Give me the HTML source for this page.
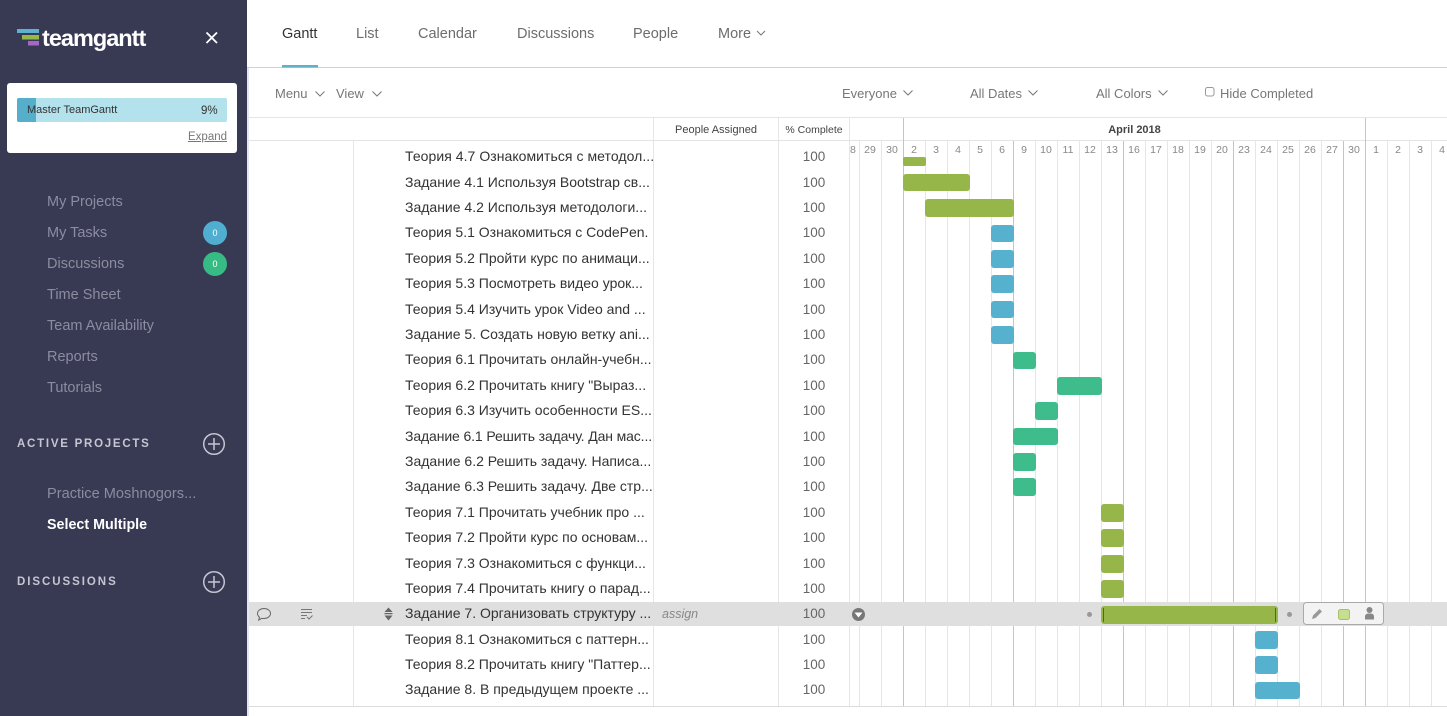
<!DOCTYPE html>
<html><head><meta charset="utf-8"><style>
html,body{margin:0;padding:0;width:1447px;height:716px;overflow:hidden;background:#fff;font-family:"Liberation Sans",sans-serif}
.a{position:absolute;white-space:nowrap}
#side{position:absolute;left:0;top:0;width:247px;height:716px;background:#383a54}
.n{position:absolute;left:47px;font-size:14.5px;color:#8b8c9f;line-height:18px;white-space:nowrap}
.h{position:absolute;left:17px;font-size:11.5px;font-weight:bold;letter-spacing:1.75px;color:#c5c6d2;line-height:14px;white-space:nowrap}
.b{position:absolute;left:203px;width:24px;height:24px;border-radius:12px;color:#fff;font-size:9px;line-height:24px;text-align:center}
.t{position:absolute;top:26px;font-size:14.5px;line-height:16px;color:#6d6d6d;white-space:nowrap}
.f{position:absolute;top:87px;font-size:13px;line-height:14px;color:#777;white-space:nowrap}
.r{position:absolute;left:405px;width:248px;height:18px;font-size:14px;line-height:18px;color:#333;white-space:nowrap;overflow:hidden}
.p{position:absolute;left:779px;width:70px;text-align:center;font-size:13.5px;line-height:18px;color:#666;margin-top:1px}
svg{position:absolute;left:0;top:0}
</style></head><body>
<div id="side">
<svg width="247" height="716">
<rect x="17" y="29" width="22" height="4" fill="#5fb2cf"/>
<rect x="22" y="35" width="17" height="4.500" fill="#95b84a"/>
<rect x="28" y="41" width="11" height="4.500" fill="#a567c6"/>
<path d="M206.500 32.500 L217 43 M217 32.500 L206.500 43" stroke="#fff" stroke-width="1.800"/>
<g fill="none" stroke="#c5c6d2" stroke-width="1.500">
<circle cx="214" cy="444" r="10.300"/><path d="M214 438V450M208 444H220"/>
<circle cx="214" cy="582" r="10.300"/><path d="M214 576V588M208 582H220"/>
</g>
</svg>
<div class="a" style="left:42px;top:24px;font-size:23.5px;font-weight:bold;color:#fff;letter-spacing:-1px;line-height:28px">teamgantt</div>
<div class="a" style="left:7px;top:83px;width:230px;height:70px;background:#fff;border-radius:3px"></div>
<div class="a" style="left:17px;top:98px;width:210px;height:24px;background:#b3e1ec;border-radius:2px"></div>
<div class="a" style="left:17px;top:98px;width:19px;height:24px;background:#55afcb;border-radius:2px 0 0 2px"></div>
<div class="a" style="left:27px;top:103px;font-size:11px;line-height:14px;color:#333">Master TeamGantt</div>
<div class="a" style="left:201px;top:104px;font-size:11.500px;line-height:14px;color:#333">9%</div>
<div class="a" style="left:188px;top:130px;font-size:11.500px;line-height:14px;color:#777;text-decoration:underline">Expand</div>
<div class="n" style="top:193px">My Projects</div>
<div class="n" style="top:224px">My Tasks</div>
<div class="n" style="top:255px">Discussions</div>
<div class="n" style="top:286px">Time Sheet</div>
<div class="n" style="top:317px">Team Availability</div>
<div class="n" style="top:348px">Reports</div>
<div class="n" style="top:379px">Tutorials</div>
<div class="b" style="top:221px;background:#50afd0">0</div>
<div class="b" style="top:252px;background:#37bb85">0</div>
<div class="h" style="top:437px">ACTIVE PROJECTS</div>
<div class="n" style="top:485px;font-size:14.6px">Practice Moshnogors...</div>
<div class="n" style="top:516px;color:#fff;font-weight:bold;font-size:14.3px">Select Multiple</div>
<div class="h" style="top:575px;letter-spacing:1.95px">DISCUSSIONS</div>
</div>

<div class="t" style="left:282px;color:#333">Gantt</div>
<div class="t" style="left:356px">List</div>
<div class="t" style="left:418px">Calendar</div>
<div class="t" style="left:517px">Discussions</div>
<div class="t" style="left:633px">People</div>
<div class="t" style="left:718px">More</div>
<div class="f" style="left:275px">Menu</div>
<div class="f" style="left:336px">View</div>
<div class="f" style="left:842px">Everyone</div>
<div class="f" style="left:970px">All Dates</div>
<div class="f" style="left:1096px">All Colors</div>
<div class="f" style="left:1220px">Hide Completed</div>

<svg width="1447" height="716">
<rect x="247" y="67" width="1200" height="1" fill="#cfd2d8"/>
<rect x="282" y="65" width="36" height="2.500" fill="#5db2c6"/>
<g fill="none" stroke="#777" stroke-width="1">
<path d="M757 31l4 4 4-4M315.500 91.500l4.500 4.500 4.500-4.500M372.500 91.500l4.500 4.500 4.500-4.500M903.500 90.500l4.500 4.500 4.500-4.500M1028.500 90.500l4.500 4.500 4.500-4.500M1158.500 90.500l4.500 4.500 4.500-4.500"/>
<rect x="1205.500" y="87.500" width="8.500" height="8.500" rx="2" stroke="#999"/>
</g>
<rect x="248" y="117" width="1199" height="1" fill="#e4e4e8"/>
<rect x="248" y="140" width="1199" height="1" fill="#e4e4e8"/>
<rect x="248" y="706" width="1199" height="1" fill="#dcdcdc"/>
<rect x="247" y="68" width="2" height="648" fill="#e6e6f0"/>
<g stroke="#e6e6e6" stroke-width="1">
<path d="M353.500 141V706M653.500 118V706M778.500 118V706M849.500 118V706"/>
<path d="M859.500 141V706M881.500 141V706M925.500 141V706M947.500 141V706M969.500 141V706M991.500 141V706M1035.500 141V706M1057.500 141V706M1079.500 141V706M1101.500 141V706M1145.500 141V706M1167.500 141V706M1189.500 141V706M1211.500 141V706M1255.500 141V706M1277.500 141V706M1299.500 141V706M1321.500 141V706M1387.500 141V706M1409.500 141V706M1431.500 141V706"/>
</g>
<g stroke="#c4c4c4" stroke-width="1">
<path d="M903.500 118V706M1013.500 141V706M1123.500 141V706M1233.500 141V706M1343.500 141V706M1365.500 118V706"/>
</g>
<rect x="249" y="602" width="1198" height="24" fill="#dfdfdf"/>
<g font-family="Liberation Sans" font-size="10.500" fill="#888" text-anchor="middle">
<text x="870" y="153">29</text><text x="892" y="153">30</text>
<text x="914" y="153">2</text><text x="936" y="153">3</text><text x="958" y="153">4</text><text x="980" y="153">5</text><text x="1002" y="153">6</text>
<text x="1024" y="153">9</text><text x="1046" y="153">10</text><text x="1068" y="153">11</text><text x="1090" y="153">12</text><text x="1112" y="153">13</text>
<text x="1134" y="153">16</text><text x="1156" y="153">17</text><text x="1178" y="153">18</text><text x="1200" y="153">19</text><text x="1222" y="153">20</text>
<text x="1244" y="153">23</text><text x="1266" y="153">24</text><text x="1288" y="153">25</text><text x="1310" y="153">26</text><text x="1332" y="153">27</text>
<text x="1354" y="153">30</text><text x="1376" y="153">1</text><text x="1398" y="153">2</text><text x="1420" y="153">3</text><text x="1442" y="153">4</text>
</g>
<text x="850" y="153" font-family="Liberation Sans" font-size="10.500" fill="#888" text-anchor="start">8</text>
<g fill="#96b64a">
<rect x="903" y="157" width="23" height="9" rx="2"/>
<rect x="903" y="174" width="67" height="17" rx="3"/>
<rect x="925" y="199" width="89" height="18" rx="3"/>
<rect x="1101" y="504" width="23" height="18" rx="3"/>
<rect x="1101" y="529" width="23" height="18" rx="3"/>
<rect x="1101" y="555" width="23" height="18" rx="3"/>
<rect x="1101" y="580" width="23" height="18" rx="3"/>
<rect x="1101" y="606" width="177" height="18" rx="3"/>
</g>
<path d="M1103.500 608V622M1275.500 608V622" stroke="#4f6a1c" stroke-width="1"/>
<g fill="#56b1cf">
<rect x="991" y="225" width="23" height="17" rx="3"/>
<rect x="991" y="250" width="23" height="18" rx="3"/>
<rect x="991" y="275" width="23" height="18" rx="3"/>
<rect x="991" y="301" width="23" height="17" rx="3"/>
<rect x="991" y="326" width="23" height="18" rx="3"/>
<rect x="1255" y="631" width="23" height="18" rx="3"/>
<rect x="1255" y="656" width="23" height="18" rx="3"/>
<rect x="1255" y="682" width="45" height="17" rx="3"/>
</g>
<g fill="#3fbc8c">
<rect x="1013" y="352" width="23" height="17" rx="3"/>
<rect x="1057" y="377" width="45" height="18" rx="3"/>
<rect x="1035" y="402" width="23" height="18" rx="3"/>
<rect x="1013" y="428" width="45" height="17" rx="3"/>
<rect x="1013" y="453" width="23" height="18" rx="3"/>
<rect x="1013" y="478" width="23" height="18" rx="3"/>
</g>
<circle cx="858.500" cy="614.500" r="6.500" fill="#777"/><path d="M854.500 612.500h8l-4 5z" fill="#fff"/>
<circle cx="1089.500" cy="614.500" r="2.500" fill="#999"/>
<circle cx="1289.500" cy="614.500" r="2.500" fill="#999"/>
<rect x="1303.500" y="602.500" width="80" height="22" rx="3" fill="#f3f3f3" stroke="#aaa"/>
<path d="M1312 619l1-3.500 6.500-6.500 2.500 2.500-6.500 6.500z" fill="#999"/>
<rect x="1338.500" y="609.500" width="11" height="10" rx="2" fill="#c6df8e" stroke="#a6c06a"/>
<circle cx="1369.500" cy="610" r="3" fill="#888"/><path d="M1365 619.500v-3q0-2.500 3-3h3q3 .5 3 3v3z" fill="#888"/>
<g fill="none" stroke="#666" stroke-width="1">
<path d="M264 608.500c-3.700 0-6.500 2.300-6.500 5 0 1.500.8 2.800 2 3.700l-.8 2.800 3.300-1.700c.7.100 1.300.2 2 .2 3.700 0 6.500-2.300 6.500-5s-2.800-5-6.500-5z"/>
<path d="M301 609.500h11M301 612.500h11M301 615.500h6M301 618.500h4M307 617l2 2 3.500-3.500" stroke="#777"/>
</g>
<path d="M388.500 607.500l4 4.500h-8zM384.500 613h8v1.200h-8zM384.500 615.500h8l-4 5z" fill="#666"/>
</svg>

<div class="a" style="left:654px;top:123px;width:124px;text-align:center;font-size:11px;line-height:14px;color:#444">People Assigned</div>
<div class="a" style="left:779px;top:123px;width:70px;text-align:center;font-size:10.500px;line-height:14px;color:#444">% Complete</div>
<div class="a" style="left:904px;top:123px;width:461px;text-align:center;font-size:11px;font-weight:bold;line-height:14px;color:#444">April 2018</div>
<div class="a" style="left:662px;top:606px;font-size:12.500px;font-style:italic;line-height:16px;color:#888">assign</div>

<div class="r" style="top:147px;width:249px;letter-spacing:.05px">Теория 4.7 Ознакомиться с методол...</div><div class="p" style="top:147px">100</div>
<div class="r" style="top:173px">Задание 4.1 Используя Bootstrap св...</div><div class="p" style="top:173px">100</div>
<div class="r" style="top:198px">Задание 4.2 Используя методологи...</div><div class="p" style="top:198px">100</div>
<div class="r" style="top:223px">Теория 5.1 Ознакомиться с CodePen.</div><div class="p" style="top:223px">100</div>
<div class="r" style="top:249px">Теория 5.2 Пройти курс по анимаци...</div><div class="p" style="top:249px">100</div>
<div class="r" style="top:274px">Теория 5.3 Посмотреть видео урок...</div><div class="p" style="top:274px">100</div>
<div class="r" style="top:300px">Теория 5.4 Изучить урок Video and ...</div><div class="p" style="top:300px">100</div>
<div class="r" style="top:325px">Задание 5. Создать новую ветку ani...</div><div class="p" style="top:325px">100</div>
<div class="r" style="top:350px">Теория 6.1 Прочитать онлайн-учебн...</div><div class="p" style="top:350px">100</div>
<div class="r" style="top:376px">Теория 6.2 Прочитать книгу "Выраз...</div><div class="p" style="top:376px">100</div>
<div class="r" style="top:401px">Теория 6.3 Изучить особенности ES...</div><div class="p" style="top:401px">100</div>
<div class="r" style="top:427px;letter-spacing:-.12px">Задание 6.1 Решить задачу. Дан мас...</div><div class="p" style="top:427px">100</div>
<div class="r" style="top:452px">Задание 6.2 Решить задачу. Написа...</div><div class="p" style="top:452px">100</div>
<div class="r" style="top:477px">Задание 6.3 Решить задачу. Две стр...</div><div class="p" style="top:477px">100</div>
<div class="r" style="top:503px">Теория 7.1 Прочитать учебник про ...</div><div class="p" style="top:503px">100</div>
<div class="r" style="top:528px">Теория 7.2 Пройти курс по основам...</div><div class="p" style="top:528px">100</div>
<div class="r" style="top:554px">Теория 7.3 Ознакомиться с функци...</div><div class="p" style="top:554px">100</div>
<div class="r" style="top:579px">Теория 7.4 Прочитать книгу о парад...</div><div class="p" style="top:579px">100</div>
<div class="r" style="top:604px">Задание 7. Организовать структуру ...</div><div class="p" style="top:604px">100</div>
<div class="r" style="top:630px">Теория 8.1 Ознакомиться с паттерн...</div><div class="p" style="top:630px">100</div>
<div class="r" style="top:655px">Теория 8.2 Прочитать книгу "Паттер...</div><div class="p" style="top:655px">100</div>
<div class="r" style="top:680px">Задание 8. В предыдущем проекте ...</div><div class="p" style="top:680px">100</div>
</body></html>
